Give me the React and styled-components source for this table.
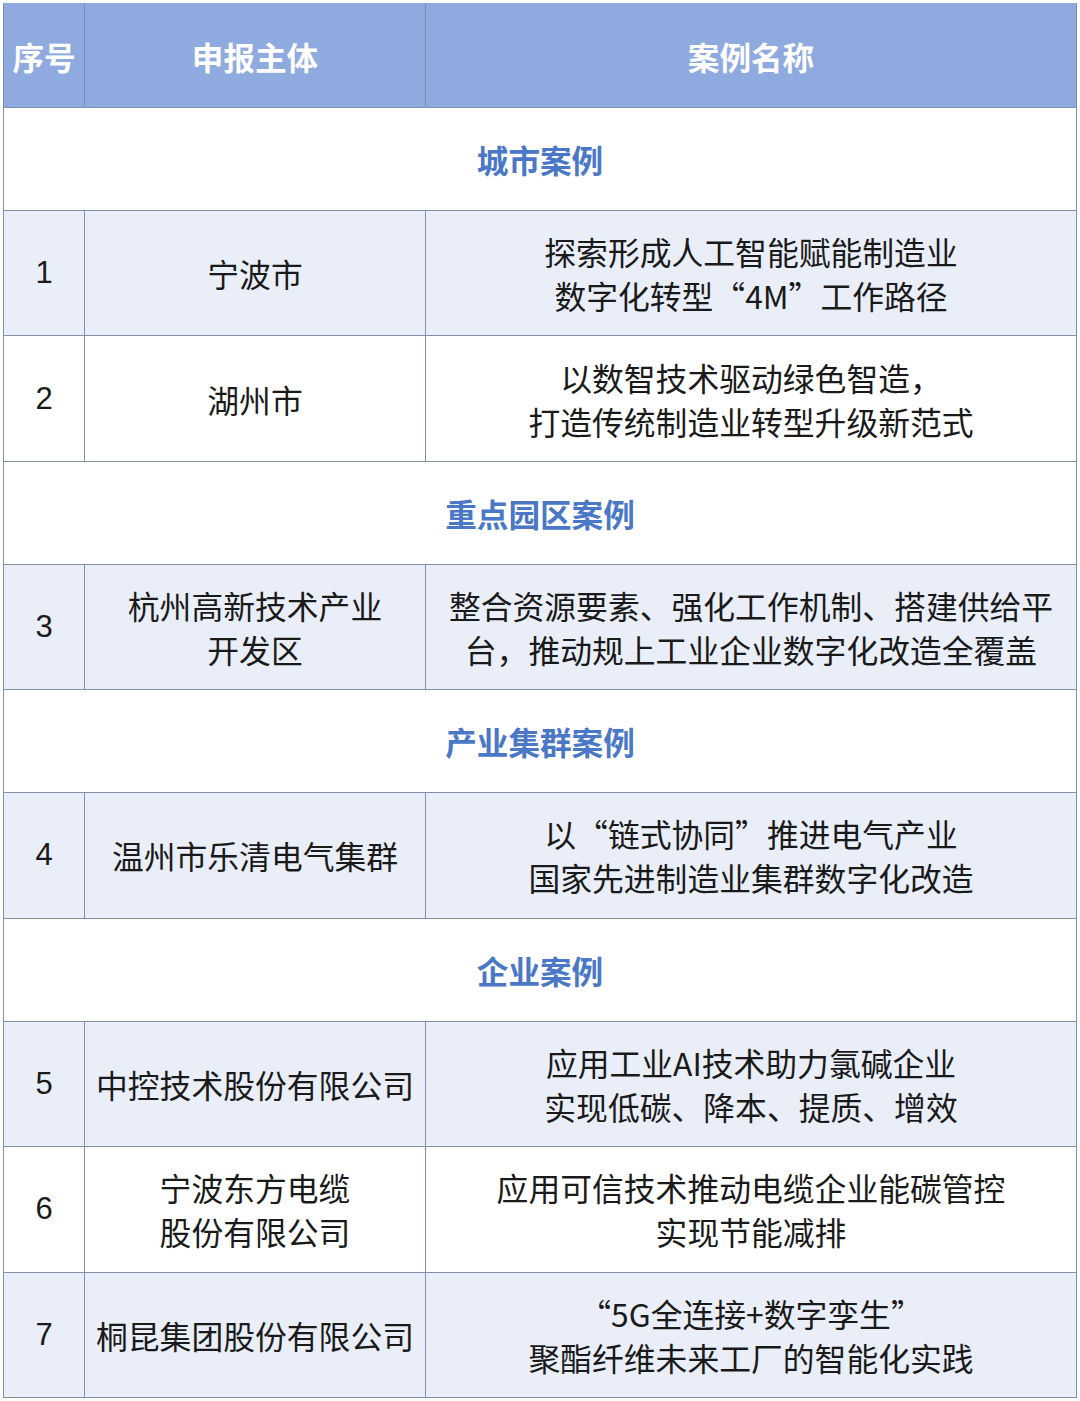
import React from "react";
import styled, { createGlobalStyle } from "styled-components";

const Global = createGlobalStyle`
  html, body { margin: 0; padding: 0; background: #ffffff; }
  body { font-family: "Noto Sans CJK SC", "Noto Sans", sans-serif; }
`;

const Page = styled.div`
  padding: 3px 0 0 3px;
  width: 1080px;
  box-sizing: border-box;
`;

const Table = styled.table`
  width: 1074px;
  border-collapse: collapse;
  table-layout: fixed;
  border: 1px solid #8291a7;
`;

const HeadCell = styled.th`
  height: 103px;
  padding: 0;
  background: #8eaadf;
  color: #ffffff;
  font-size: 31.6px;
  font-weight: 700;
  text-align: center;
  vertical-align: middle;
  border: 1px solid #7b8fb5;
  border-top-color: #8eaadf;
  width: ${(p) => p.$w || "auto"};
`;

const SectionCell = styled.td`
  height: 101.8px;
  padding: 0;
  background: #ffffff;
  color: #4a78c6;
  font-size: 31.6px;
  font-weight: 700;
  text-align: center;
  vertical-align: middle;
  border: 1px solid #8291a7;
`;

const Cell = styled.td`
  height: 124.6px;
  padding: 0;
  background: ${(p) => (p.$light ? "#e9eef9" : "#ffffff")};
  color: #1a1a1a;
  font-size: 31.8px;
  line-height: 44px;
  text-align: center;
  vertical-align: middle;
  white-space: nowrap;
  border: 1px solid #8291a7;
`;

const NumCell = styled(Cell)`
  font-family: "Liberation Sans", "Noto Sans", sans-serif;
  font-size: 31px;
`;

const rows = [
  { type: "section", title: "城市案例" },
  { no: "1", org: ["宁波市"], name: ["探索形成人工智能赋能制造业", "数字化转型“4M”工作路径"], light: true },
  { no: "2", org: ["湖州市"], name: ["以数智技术驱动绿色智造，", "打造传统制造业转型升级新范式"], light: false },
  { type: "section", title: "重点园区案例" },
  { no: "3", org: ["杭州高新技术产业", "开发区"], name: ["整合资源要素、强化工作机制、搭建供给平", "台，推动规上工业企业数字化改造全覆盖"], light: true },
  { type: "section", title: "产业集群案例" },
  { no: "4", org: ["温州市乐清电气集群"], name: ["以“链式协同”推进电气产业", "国家先进制造业集群数字化改造"], light: true },
  { type: "section", title: "企业案例" },
  { no: "5", org: ["中控技术股份有限公司"], name: ["应用工业AI技术助力氯碱企业", "实现低碳、降本、提质、增效"], light: true },
  { no: "6", org: ["宁波东方电缆", "股份有限公司"], name: ["应用可信技术推动电缆企业能碳管控", "实现节能减排"], light: false },
  { no: "7", org: ["桐昆集团股份有限公司"], name: ["“5G全连接+数字孪生”", "聚酯纤维未来工厂的智能化实践"], light: true },
];

const Lines = ({ items }) =>
  items.map((t, i) => (
    <React.Fragment key={i}>
      {i > 0 && <br />}
      {t}
    </React.Fragment>
  ));

export default function App() {
  return (
    <Page>
      <Global />
      <Table>
        <thead>
          <tr>
            <HeadCell $w="80px">序号</HeadCell>
            <HeadCell $w="340px">申报主体</HeadCell>
            <HeadCell>案例名称</HeadCell>
          </tr>
        </thead>
        <tbody>
          {rows.map((r, i) =>
            r.type === "section" ? (
              <tr key={i}>
                <SectionCell colSpan={3}>{r.title}</SectionCell>
              </tr>
            ) : (
              <tr key={i}>
                <NumCell $light={r.light}>{r.no}</NumCell>
                <Cell $light={r.light}>
                  <Lines items={r.org} />
                </Cell>
                <Cell $light={r.light}>
                  <Lines items={r.name} />
                </Cell>
              </tr>
            )
          )}
        </tbody>
      </Table>
    </Page>
  );
}
